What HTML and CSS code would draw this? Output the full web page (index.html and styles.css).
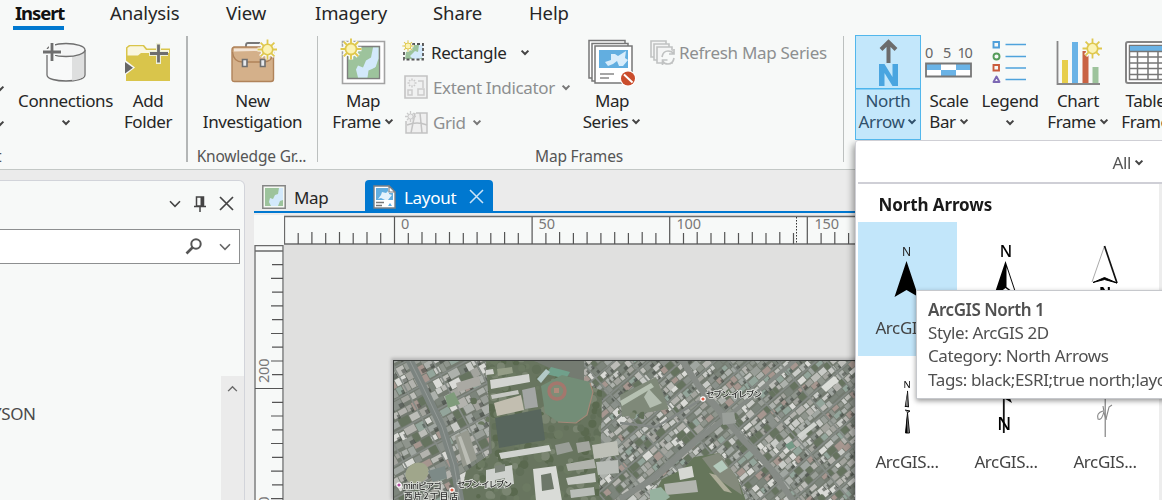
FILE: index.html
```html
<!DOCTYPE html>
<html lang="en">
<head>
<meta charset="utf-8">
<title>Layout</title>
<link rel="stylesheet" href="styles.css">
</head>
<body>
<svg class="defs" width="0" height="0">
  <defs>
    <symbol id="chev" viewBox="0 0 10 7"><path d="M1.6 1.6 5 5 8.4 1.6" fill="none" stroke="currentColor" stroke-width="2"/></symbol>
    <symbol id="thin" viewBox="0 0 12 8"><path d="M1 1.3 6 6.3 11 1.3" fill="none" stroke="currentColor" stroke-width="1.6"/></symbol>
    <symbol id="sun" viewBox="-10 -10 20 20">
      <path d="M0-9.5V9.5M-9.5 0H9.5M-6.6-6.6 6.6 6.6M6.6-6.6-6.6 6.6" stroke="#f7f9f8" stroke-width="4"/>
      <circle r="7" fill="#f7f9f8"/>
      <path d="M0-9.5V9.5M-9.5 0H9.5M-6.6-6.6 6.6 6.6M6.6-6.6-6.6 6.6" stroke="#dfc84e" stroke-width="1.7"/>
      <circle r="5" fill="#fbf3b4" stroke="#dfc84e" stroke-width="1.6"/>
    </symbol>
  </defs>
</svg>

<header class="ribbon">
  <nav class="tabs">
    <span class="tab tab-on">Insert</span><span class="tab">Analysis</span><span class="tab">View</span><span class="tab">Imagery</span><span class="tab">Share</span><span class="tab">Help</span>
  </nav>
  <div class="groups">
    <section class="group g-project">
      <div class="tools">
        <div class="cut"><svg class="chev"><use href="#chev"/></svg><svg class="chev"><use href="#chev"/></svg></div>
        <div class="big w-conn">
          <svg class="ico" width="48" height="48" viewBox="0 0 48 48">
            <path d="M5 12v25c0 8 38 8 38 0V12" fill="#f8f9f9" stroke="#6f6f6f" stroke-width="1.3"/>
            <path d="M30 17v25.500c7-.8 12-2.500 12-5.500V12c-1 3-5 4.500-12 5z" fill="#dedfdf"/>
            <ellipse cx="24" cy="12" rx="19" ry="6.500" fill="#f4f5f5" stroke="#6f6f6f" stroke-width="1.3"/>
            <path d="M10 4v20M0 14h20" stroke="#f7f9f8" stroke-width="6"/>
            <path d="M10 5v18M1 14h18" stroke="#6e6e6e" stroke-width="2.800"/>
          </svg>
          <span>Connections</span><svg class="chev under"><use href="#chev"/></svg>
        </div>
        <div class="big w-folder">
          <svg class="ico" width="48" height="48" viewBox="0 0 48 48">
            <path d="M2 9.500 5 7h15l3 3.500h23V43H2z" fill="#d9c54b"/>
            <path d="M3.500 10 6 8.300h13l3 3.700h23v3H17l-3 2.500H3.500z" fill="#f9f6df"/>
            <path d="M34.500 5v21M25 15.500h19" stroke="#eef0d8" stroke-width="5"/>
            <path d="M34.500 6.500v18M26 15.500h18" stroke="#6e6e6e" stroke-width="2.800"/>
            <path d="M0 21v17l11-8.500z" fill="#f7f9f8"/><path d="M1 24v11.500l8-5.800z" fill="#666"/>
          </svg>
          <span>Add</span><span>Folder</span>
        </div>
      </div>
      <div class="caption cap-left">t</div>
    </section>
    <section class="group g-know">
      <div class="tools center">
        <div class="big w-inv">
          <svg class="ico" width="48" height="48" viewBox="0 0 48 48">
            <path d="M17 10V7q0-2 2-2h12" fill="none" stroke="#777" stroke-width="1.800"/>
            <path d="M4.500 9h40v32q0 2.500-2.500 2.500H5.500Q3 43.500 3 41V12q0-3 3-3z" fill="#d4b08a" stroke="#b0835a" stroke-width="1.400"/>
            <path d="M5 10.500h37v3q-16-1-37 0z" fill="#f3e5d7"/>
            <path d="M3.500 14q1 10 10 10h21q9 0 10-10" fill="none" stroke="#b0835a" stroke-width="1.400"/>
            <path d="M13.500 21.500h4.500v7h-4.500zM31.500 21.500H36v7h-4.500z" fill="#e8eaee" stroke="#6f6f6f" stroke-width="1.600"/>
            <use href="#sun" x="28" y="1" width="21" height="21"/>
          </svg>
          <span>New</span><span>Investigation</span>
        </div>
      </div>
      <div class="caption">Knowledge Gr...</div>
    </section>
    <section class="group g-frames">
      <div class="tools">
        <div class="big w-mapframe">
          <svg class="ico" width="48" height="48" viewBox="0 0 48 48">
            <path d="M3.500 3.500h42v42h-42z" fill="#fff" stroke="#a3a3a3" stroke-width="1.600"/>
            <path d="M8.500 8.500h32v32h-32z" fill="#9dc39c" stroke="#7e7e7e" stroke-width="1.400"/>
            <path d="M39.500 9.500v11l-3 9-7 3-1 7H19l-2-8 2-4 5 2 3-7 5-3 2-10z" fill="#d3e9fb"/>
            <path d="m34 31 5.500-4v12.500H29.500l1-5z" fill="#9dc39c"/>
            <use href="#sun" x="1" y="0" width="22" height="22"/>
          </svg>
          <span>Map</span><span>Frame<svg class="chev"><use href="#chev"/></svg></span>
        </div>
        <div class="smalls">
          <div class="small">
            <svg width="24" height="24" viewBox="0 0 24 24"><path d="M3 19 4 12 9 10 12 5h8v14z" fill="#9dc39c"/><path d="m11 19-3-3 5-5 3 1 1-7h4v12l-4 2z" fill="#d3e9fb"/><path d="M10 4h11v15.500H2V10" fill="none" stroke="#555" stroke-width="1.800" stroke-dasharray="3 2"/><use href="#sun" x="0" y="0" width="12" height="12"/></svg>
            <span>Rectangle</span><svg class="chev gap"><use href="#chev"/></svg>
          </div>
          <div class="small off">
            <svg width="26" height="24" viewBox="-2 0 26 24"><path d="M1 1h22v22H1z" fill="#f0f1f1" stroke="#c3c3c3" stroke-width="1.600"/><path d="M8 3.500v9M3.500 8h9M5 5l6 6m0-6-6 6M14 6h5v7M4 15h4v5H4zM14 14h6v6h-6z" fill="none" stroke="#cbcbcb" stroke-width="1.500"/><circle cx="8" cy="8" r="2.500" fill="#eee"/></svg>
            <span class="ls">Extent Indicator</span><svg class="chev"><use href="#chev"/></svg>
          </div>
          <div class="small off">
            <svg width="26" height="24" viewBox="-2 0 26 24"><path d="M12 3h11v20H2V11" fill="#efefef" stroke="#c3c3c3" stroke-width="1.500"/><path d="M11 3 7 23M16 3l2 20M3 15q10-4 20 0" fill="none" stroke="#c3c3c3" stroke-width="1.500"/><path d="M6.500 1v11M1 6.500h11M3 3l7 7m0-7-7 7" stroke="#cbcbcb" stroke-width="1.300"/><circle cx="6.500" cy="6.500" r="2.500" fill="#eee" stroke="#ccc"/></svg>
            <span>Grid</span><svg class="chev"><use href="#chev"/></svg>
          </div>
        </div>
        <div class="big w-series">
          <svg class="ico" width="52" height="48" viewBox="0 0 52 48">
            <g fill="#fff" stroke="#777" stroke-width="1.500"><path d="M3 2.500h36V40H3z"/><path d="M6 5.500h36V43H6z"/><path d="M9 8h37v37H9z"/></g>
            <path d="M13 12h29v18H13z" fill="#62aee0"/><path d="M25 16h4l3 2 8-5-1 7 3 2-5 6h-4l-2-5-4 3-5 2-3-4 6-2z" fill="#d9edfb"/>
            <path d="M14 36h14M14 40h9" stroke="#888" stroke-width="1.500"/>
            <circle cx="42" cy="40.500" r="8" fill="#fff"/><circle cx="42" cy="40.500" r="7" fill="#ca4d2c"/><path d="m38 36.500 8.500 8" stroke="#fff" stroke-width="2"/>
          </svg>
          <span>Map</span><span>Series<svg class="chev"><use href="#chev"/></svg></span>
        </div>
        <div class="small off refresh">
          <svg width="25" height="25" viewBox="0 0 25 25"><g fill="#f4f5f5" stroke="#c0c2c2" stroke-width="1.600"><path d="M1 1h15v16H1z"/><path d="M4 4h15v16H4z"/><path d="M7 7h15v16H7z"/></g><circle cx="18" cy="17" r="7.500" fill="#f7f9f8"/><path d="M12 17q1-6 6-6 4 0 6 3m0-5v5h-5M24 18q-1 6-6 6-4 0-5.500-3m0 4v-5h5" fill="none" stroke="#c0c2c2" stroke-width="1.700"/></svg>
          <span>Refresh Map Series</span>
        </div>
      </div>
      <div class="caption">Map Frames</div>
    </section>
    <section class="group g-surround">
      <div class="tools">
        <div class="big w-north">
          <svg class="ico" width="48" height="52" viewBox="0 0 48 52"><path d="M24.500 27V7M17 13.500 24.500 6l7.500 7.500" fill="none" stroke="#6c6c6c" stroke-width="4"/><path d="M15 50V28h5.500l8 13V28H34v22h-5.500l-8-13v13z" fill="#4aa5e0"/></svg>
          <span>North</span><span>Arrow<svg class="chev"><use href="#chev"/></svg></span>
        </div>
        <div class="big w-scale">
          <svg class="ico" width="50" height="48" viewBox="0 0 50 48"><g font-family="Noto Sans" font-size="14.500" fill="#666"><text x="1" y="20">0</text><text x="19" y="20">5</text><text x="33.500" y="20" textLength="15">10</text></g><path d="M2 25.500h45v13H2z" fill="#fff"/><path d="M2 25.500h15V32H2zM17 32h15v6.500H17zM32 25.500h15V32H32z" fill="#6ab3e6"/><path d="M2 25.500h45v13H2z" fill="none" stroke="#777" stroke-width="1.800"/></svg>
          <span>Scale</span><span>Bar<svg class="chev"><use href="#chev"/></svg></span>
        </div>
        <div class="big w-legend">
          <svg class="ico" width="48" height="48" viewBox="0 0 48 48"><g fill="none" stroke-width="1.900"><path d="M7.500 4h5.500v5.500H7.500z" stroke="#4f9fda"/><circle cx="10.500" cy="18.500" r="3" stroke="#559c5a"/><path d="M7.500 27h5.500v5.500H7.500z" stroke="#ca5b3c"/><path d="M10.500 38.500 13.500 44h-6z" stroke="#7c68b4" stroke-linejoin="round"/><path d="M19.500 6.500H40M19.500 18.500H40M19.500 30H40M19.500 41.500H40" stroke="#4fa3dc" stroke-width="1.600"/></g></svg>
          <span>Legend</span><svg class="chev under"><use href="#chev"/></svg>
        </div>
        <div class="big w-chart">
          <svg class="ico" width="48" height="48" viewBox="0 0 48 48"><path d="M8 22h6v23H8z" fill="#e7ce4c"/><path d="M18 4h6v41h-6z" fill="#6ab3e6"/><path d="M28.500 13h6v32h-6z" fill="#c96343"/><path d="M38.500 29h6v16h-6z" fill="#9dc39c"/><path d="M3.500 3v43H46" fill="none" stroke="#888" stroke-width="1.800"/><use href="#sun" x="28" y="0" width="21" height="21"/></svg>
          <span>Chart</span><span>Frame<svg class="chev"><use href="#chev"/></svg></span>
        </div>
        <div class="big w-table">
          <svg class="ico" width="48" height="48" viewBox="0 0 48 48"><rect x="4" y="4" width="52" height="41" rx="2" fill="#fff" stroke="#858585" stroke-width="2"/><path d="M7.500 7.500H50v34H7.500z" fill="#fff" stroke="#777" stroke-width="1.500"/><path d="M8 8h42v5H8z" fill="#6ab3e6"/><path d="M7 13.500h43M7 19h43M7 25h43M7 30.500h43M7 36.500h43M15.500 13v28M26 13v28M36 13v28M46 13v28" stroke="#777" stroke-width="1.500"/></svg>
          <span>Table</span><span>Frame</span>
        </div>
      </div>
    </section>
  </div>
</header>

<main class="work">
  <aside class="pane">
    <div class="pane-bar">
      <svg width="12" height="8"><use href="#thin"/></svg>
      <svg width="12" height="16" viewBox="0 0 12 16"><path d="M2.500 1h7v9h-7zM0 10.500h12M6 10.500V16" fill="none" stroke="#444" stroke-width="1.500"/><path d="M6.500 1h3v9h-3z" fill="#444"/></svg>
      <svg width="15" height="15" viewBox="0 0 15 15"><path d="m1 1 13 13M14 1 1 14" stroke="#444" stroke-width="1.700"/></svg>
    </div>
    <div class="search">
      <svg width="18" height="17" viewBox="0 0 18 17"><circle cx="11" cy="6" r="4.700" fill="none" stroke="#555" stroke-width="2"/><path d="M7.500 9.500 1.500 15.500" stroke="#555" stroke-width="2.600"/></svg>
      <svg width="12" height="8"><use href="#thin"/></svg>
    </div>
    <div class="pane-body">
      <span class="node">YSON</span>
      <div class="scroll"><svg width="11" height="7" viewBox="0 0 12 8"><path d="M1 7 6 2l5 5" fill="none" stroke="#666" stroke-width="1.600"/></svg></div>
    </div>
  </aside>

  <section class="doc">
    <div class="doc-tabs">
      <div class="doc-tab">
        <svg width="24" height="24" viewBox="0 0 24 24"><path d="M.8.800h22.400v22.400H.8z" fill="#f5f8f2" stroke="#858585" stroke-width="1.500"/><path d="M3 3h18v18H3z" fill="#9dc39c"/><path d="M17 3h4v12l-3 1-2 5H9l-2-4 1-4 3 1 2-4 3-1z" fill="#d3e9fb"/></svg>
        <span>Map</span>
      </div>
      <div class="doc-tab doc-on">
        <svg width="23" height="24" viewBox="0 0 23 24"><path d="M1 1h15l6 6v16H1z" fill="#fff" stroke="#7c8084" stroke-width="1.400"/><path d="M3 3h12v5h5v7H3z" fill="#62aee0"/><path d="m9 7 4 1 3-3v4l3 1-4 5h-3l-4-2-3 1 3-4z" fill="#e4f2fc"/><path d="M16 1v6h6z" fill="#fff" stroke="#7c8084" stroke-width="1.200"/><path d="M3 17.500h8M3 20.500h6" stroke="#777" stroke-width="1.300"/><path d="m15 21 2-3 2 3z" fill="#62aee0"/></svg>
        <span>Layout</span>
        <svg class="close" width="15" height="15" viewBox="0 0 15 15"><path d="m1 1 13 13M14 1 1 14" stroke="#cfe5f7" stroke-width="1.500"/></svg>
      </div>
    </div>
    <div class="view">
      <div class="corner"></div>
      <svg class="hruler" width="577" height="30" viewBox="0 0 577 30">
        <path d="M577 1.500H.500V29H577" fill="#f7f9f8" stroke="#6a6a6a" stroke-width="1.300"/>
        <path id="hticks" fill="none" stroke="#555" stroke-width="1.200"/>
        <path d="M512.500 2v27" stroke="#333" stroke-dasharray="1.500 1.500"/>
        <g class="rl"><text x="117" y="14">0</text><text x="254.500" y="14" textLength="16.500">50</text><text x="392.500" y="14" textLength="24.500">100</text><text x="530.500" y="14" textLength="24.500">150</text></g>
      </svg>
      <svg class="vruler" width="30" height="255" viewBox="0 0 30 255">
        <path d="M1 0V255M1 .500H29M29 0V255M1 6H29" fill="none" stroke="#6a6a6a" stroke-width="1.300"/>
        <path id="vticks" fill="none" stroke="#555" stroke-width="1.200"/>
        <g class="rl"><text transform="translate(14.500 138) rotate(-90)" textLength="24.500">200</text><text transform="translate(14.500 276) rotate(-90)" textLength="24.500">150</text></g>
      </svg>
      <div class="page-area">
        <div class="map">
          <canvas id="imagery" width="470" height="140"></canvas>
          <svg class="places" width="470" height="140" viewBox="0 0 470 140">
            <g fill="#e0604a" stroke="#fff" stroke-width="1.200"><circle cx="309" cy="38" r="2.200"/><circle cx="58" cy="129" r="2.200"/></g><circle cx="5" cy="124" r="2.200" fill="#b44fa0" stroke="#fff" stroke-width="1.200"/>
            <text x="312" y="35.500" textLength="56">セブン-イレブン</text>
            <text x="63" y="126" textLength="55">セブン-イレブン</text>
            <text x="9" y="128" textLength="39">miniピアゴ</text>
            <text x="10" y="138" textLength="54">西片2丁目店</text>
          </svg>
        </div>
      </div>
    </div>
  </section>
</main>

<div class="gallery">
  <div class="filter"><span>All</span><svg class="chev"><use href="#chev"/></svg></div>
  <div class="gallery-body">
    <h2>North Arrows</h2>
    <div class="grid">
      <div class="cell cell-on">
        <svg width="60" height="70" viewBox="0 0 60 70"><text x="29.500" y="11.500" font-size="12" text-anchor="middle" fill="#222">N</text><path d="M29.500 17 41.500 53 29.500 46 17.500 53z"/></svg>
        <span>ArcGIS...</span>
      </div>
      <div class="cell">
        <svg width="60" height="70" viewBox="0 0 60 70"><text x="30" y="13" font-size="16" text-anchor="middle" font-weight="500" textLength="11">N</text><path d="M29.500 17 41.500 53 29.500 44 17.500 53z"/><path d="M30.500 23 39.500 50 30.500 43z" fill="#fff"/></svg>
        <span>ArcGIS...</span>
      </div>
      <div class="cell">
        <svg width="60" height="70" viewBox="0 0 60 70"><path d="M29.500 2 17 38" stroke="#aaa" fill="none"/><path d="M29.500 2 42 39" stroke="#111" stroke-width="1.700" fill="none"/><path d="M18 38.500 29.500 33.500 42 39 29.500 35.500z" stroke="#000"/><text x="30" y="53" font-size="15" font-weight="bold" text-anchor="middle">N</text></svg>
        <span>ArcGIS...</span>
      </div>
      <div class="cell">
        <svg width="60" height="70" viewBox="0 0 60 70"><text x="30" y="10" font-size="9.500" text-anchor="middle">N</text><path d="M30.500 12v17h-2.800z"/><path d="M30.500 13l1 16-3-1M28 32l5 1-3 2M30.500 35l2 20h-4z" fill="#888" stroke="#111" stroke-width="1"/><path d="m30 38-1.500 17h2z"/></svg>
        <span>ArcGIS...</span>
      </div>
      <div class="cell">
        <svg width="60" height="70" viewBox="0 0 60 70"><path d="M27.800 10v45" stroke="#111" stroke-width="1.800"/><path d="M27 20V4l9 21-5-3z"/><text x="28.300" y="52" font-size="18" font-weight="500" text-anchor="middle" textLength="12">N</text></svg>
        <span>ArcGIS...</span>
      </div>
      <div class="cell">
        <svg width="60" height="70" viewBox="0 0 60 70"><path d="M30.200 10v49" stroke="#777" stroke-width="1.100"/><path d="M28 33q-7 2-5 8 4 2 6-8l-1-5q2 14 4 13M31 41l3-12 3-2" fill="none" stroke="#888" stroke-width="1.100"/></svg>
        <span>ArcGIS...</span>
      </div>
    </div>
  </div>
</div>

<div class="tip">
  <b>ArcGIS North 1</b>
  <span>Style: ArcGIS 2D</span>
  <span>Category: North Arrows</span>
  <span>Tags: black;ESRI;true north;layout</span>
</div>
<script src="map.js"></script>
</body>
</html>
```
FILE: styles.css
```css
* { box-sizing: border-box; }
body { margin: 0; width: 1162px; height: 500px; overflow: hidden; position: relative; background: #ebebeb; color: #262626; font: 17px/21px "Noto Sans", "Noto Sans CJK JP", sans-serif; letter-spacing: -0.4px; white-space: nowrap; }
svg { flex: none; }
.defs { position: absolute; }

.ribbon { height: 170px; background: #f7f9f8; border-bottom: 1.5px solid #c3c8c6; overflow: hidden; }
.tabs { display: grid; grid-template-columns: 97px 116px 89px 118px 96px 80px; padding-left: 13px; height: 36px; font-size: 18.500px; letter-spacing: -0.1px; line-height: 25px; }
.tab { height: 30px; }
.tab-on { width: 51px; padding-left: 2px; font-weight: 700; letter-spacing: -1.1px; border-bottom: 4px solid #0078d0; color: #111; }
.groups { display: flex; height: 126px; }
.group { flex: none; display: flex; flex-direction: column; border-right: 1.5px solid #bcc0bf; }
.g-project { width: 188px; border-right: 2px solid #b3b6b6; }
.g-know { width: 130px; }
.g-frames { width: 526px; }
.g-surround { width: 330px; border: 0; padding-left: 11px; }
.tools { flex: none; display: flex; height: 110px; }
.center { justify-content: center; }
.caption { height: 16px; font-size: 15.500px; letter-spacing: -0.2px; line-height: 20px; text-align: center; color: #555; }
.g-frames .caption { padding-right: 3px; }
.g-know .caption { padding-right: 2px; }
.cap-left { text-align: left; text-indent: -4px; }
.big { flex: none; display: flex; flex-direction: column; align-items: center; height: 104px; }
.big .ico { height: 50px; margin: 1px 0 3px; overflow: hidden; }
.big span { display: flex; align-items: center; }
.chev { width: 10px; height: 7px; margin-left: 3px; color: #444; }
.big .under { margin: 8px 0 0; }
.cut { width: 16px; padding-top: 49px; display: flex; flex-direction: column; gap: 28px; }
.cut .chev { margin-left: -5px; }
.w-conn { width: 99px; }
.w-folder { width: 66px; }
.w-inv { width: 110px; }
.w-mapframe { width: 66px; margin-left: 12px; }
.w-series { width: 66px; margin-left: 7px; }
.smalls { width: 176px; padding: 4px 0 0 6px; display: flex; flex-direction: column; gap: 11px; }
.small { display: flex; align-items: center; gap: 5px; height: 24px; }
.small .chev { margin-left: 1px; }
.small .gap { margin-left: 9px; }
.ls { letter-spacing: -0.35px; }
.off { color: #8d8f90; }
.off .chev { color: #777; }
.refresh { margin: 4px 0 0 5px; gap: 4px; letter-spacing: -0.3px; }
.w-north { width: 66px; margin-top: -1px; height: 105px; border: 1.500px solid #52b7ec; background: linear-gradient(#4cb5ed, #4cb5ed) 0 52px / 100% 1.500px no-repeat #c3e7fb; color: #2f506b; }
.big.w-north .ico { height: 52px; margin: 0 0 2px; }
.w-north .chev { color: #2f506b; }
.w-scale { width: 56px; }
.w-legend { width: 66px; }
.w-chart { width: 70px; }
.w-table { width: 65px; }

.work { display: flex; height: 330px; padding-top: 10px; }
.pane { flex: none; width: 245px; height: 322px; background: #f7f9f8; border: 1.500px solid #d2d4da; border-left: 0; border-radius: 0 6px 0 0; }
.pane-bar { height: 48px; display: flex; align-items: center; justify-content: flex-end; gap: 13px; padding: 0 10px 3px 0; color: #444; }
.search { width: 240px; height: 35px; margin-bottom: 112px; background: #fff; border: 1.500px solid #8d8f90; border-left: 0; display: flex; align-items: center; justify-content: flex-end; gap: 16px; padding-right: 8px; color: #666; }
.pane-body { display: flex; justify-content: space-between; height: 125px; overflow: hidden; }
.node { margin: 27px 0 0 -8px; color: #4a4a4a; }
.scroll { width: 23px; background: #ebebeb; display: flex; justify-content: center; padding-top: 9px; }

.doc { flex: none; width: 907px; margin-left: 9px; }
.doc-tabs { display: flex; height: 33px; border-bottom: 2.500px solid #0078d0; }
.doc-tab { width: 111px; display: flex; align-items: center; gap: 8px; padding: 3px 0 0 8px; }
.doc-tab span { font-size: 17px; }
.doc-on { width: 128px; background: #0078d0; border-radius: 4px 4px 0 0; color: #fff; }
.doc-on span { letter-spacing: -0.3px; }
.doc-on .close { margin-left: 5px; margin-top: -2px; }
.view { display: grid; grid-template-columns: 30px 877px; grid-template-rows: 30px 255px; margin-top: 2px; }
.corner { background: #f7f9f8; }
.vruler { background: #f7f9f8; }
.rl text { font-size: 14.500px; fill: #777; letter-spacing: 0; }
.page-area { background: #e0e0df; padding: 115px 0 0 109px; }
.map { position: relative; width: 470px; height: 140px; border: solid #3b3e3c; border-width: 1.500px 0 0 1.500px; box-shadow: -1px -1px 3px 1px #b4b4b4; }
.places { position: absolute; left: 0; top: 0; font: 500 8.500px "Noto Sans CJK JP", sans-serif; letter-spacing: 0; fill: #2c2c2c; }
.places text { stroke: #dfe2dc; stroke-width: 1.600px; paint-order: stroke; }

.gallery { position: absolute; left: 855px; top: 140px; width: 320px; height: 370px; background: #fff; border: 1.500px solid #cfcfd5; border-radius: 3px; box-shadow: -2px 4px 7px rgba(0, 0, 0, .4); clip-path: inset(0 0 0 -12px); }
.filter { display: flex; align-items: center; height: 43px; margin-left: 1.500px; padding: 1px 0 0 255px; border-bottom: 2px solid #cfcfd6; color: #555; }
.gallery-body { margin-left: 1.500px; width: 306px; height: 330px; border-right: 5px solid #ededed; }
h2 { margin: 0; height: 38px; padding-left: 21px; font-size: 17px; line-height: 41px; letter-spacing: -0.1px; color: #1a1a1a; }
.grid { display: grid; grid-template-columns: 99px 99px 99px; grid-auto-rows: 134px; width: 297px; }
.cell { display: flex; flex-direction: column; align-items: center; padding-top: 22px; color: #444; }
.cell svg { margin-bottom: 3px; letter-spacing: 0; }
.cell-on { background: #c2e6fa; }

.tip { position: absolute; left: 916px; top: 290px; width: 260px; height: 109px; padding: 7px 0 0 11px; background: #fff; border: 1.500px solid #c6c8cc; box-shadow: 0 2px 5px rgba(0, 0, 0, .4); display: flex; flex-direction: column; line-height: 23.200px; color: #505050; letter-spacing: -0.37px; }
.tip b { font-weight: 600; color: #505050; letter-spacing: -0.45px; }
```
FILE: map.js
```js
// Ruler ticks: ten divisions per 50 mm
(function () {
  var h = '', v = '', k, p;
  for (k = -7; k < 35; k++) {
    p = (110.5 + k * 13.76).toFixed(1);
    h += 'M' + p + ' ' + (k % 10 === 0 ? 2 : k % 2 ? 18 : 17) + 'V29';
  }
  for (k = -9; k < 9; k++) {
    p = (143.5 + k * 13.76).toFixed(1);
    v += 'M' + (k === 0 ? 1 : k % 2 ? 18 : 17) + ' ' + p + 'H29';
  }
  document.getElementById('hticks').setAttribute('d', h);
  document.getElementById('vticks').setAttribute('d', v);
})();

// Aerial imagery: roofs, roads, school grounds and trees
(function () {
  var c = document.getElementById('imagery').getContext('2d');
  var seed = 7;
  function rnd() { seed = (seed * 16807) % 2147483647; return seed / 2147483647; }
  function path(pts) {
    c.beginPath();
    for (var i = 0; i < pts.length; i += 2) c.lineTo(pts[i], pts[i + 1]);
  }
  function poly(col, pts) { path(pts); c.closePath(); c.fillStyle = col; c.fill(); }
  function road(col, w, pts) { path(pts); c.strokeStyle = col; c.lineWidth = w; c.stroke(); }
  var roofs = ['#adb1ac', '#999e98', '#c9cbc7', '#8b918b', '#a3a49e', '#b3b3ae', '#8f958d', '#dadbd7', '#a6968f', '#93a59b', '#7d857c', '#a0a6a1', '#bcbdb8'];
  function blocks(area, angle, s) {
    c.save();
    path(area); c.closePath(); c.clip();
    c.translate(230, 70); c.rotate(angle);
    var row = 0, y, x, w;
    for (y = -280; y < 280; y += s, row++) {
      if (row % 4 === 3) { c.fillStyle = '#858b86'; c.fillRect(-320, y, 640, 1.6); y += 1.8 - s; continue; }
      for (x = -320 + rnd() * 6; x < 320; x += w + 0.8) {
        w = s * (0.5 + rnd() * 0.8);
        if (rnd() < 0.09) { c.fillStyle = '#66735f'; c.fillRect(x, y, w, s * 0.9); continue; }
        c.fillStyle = roofs[Math.floor(rnd() * roofs.length)];
        c.fillRect(x, y + rnd() * 1.6, w, s * (0.55 + rnd() * 0.45));
        if (rnd() < 0.4) { c.fillStyle = 'rgba(60,66,60,.55)'; c.fillRect(x + w * 0.6, y + s * 0.5, w * 0.5, s * 0.5); }
      }
    }
    for (x = -320; x < 320; x += 37) { c.fillStyle = '#858b86'; c.fillRect(x, -280, 1.6, 560); }
    c.restore();
  }
  function trees(area, n) {
    c.save(); path(area); c.closePath(); c.clip();
    var x0 = Math.min(area[0], area[6]), y0 = Math.min(area[1], area[3]);
    for (var i = 0; i < n; i++) {
      c.fillStyle = ['#5a694f', '#6c7a62', '#616f58', '#7b8672'][i % 4];
      c.beginPath(); c.arc(x0 - 10 + rnd() * 200, y0 - 5 + rnd() * 145, 2 + rnd() * 3, 0, 7); c.fill();
    }
    c.restore();
  }
  c.filter = 'blur(0.7px)';
  c.fillStyle = '#747b71'; c.fillRect(0, 0, 470, 140);
  blocks([0, 0, 95, 0, 95, 140, 0, 140], -0.5, 9);
  blocks([190, 0, 470, 0, 470, 140, 190, 140], -0.72, 6.8);

  // School campus
  var campus = [92, 0, 140, 0, 208, 30, 205, 140, 66, 140, 72, 110, 98, 92];
  poly('#68755f', campus); trees(campus, 500);
  trees([66, 30, 95, 30, 95, 65, 66, 60], 90);
  poly('#7f9b7b', [51, 35, 60, 31, 66, 43, 54, 47]);
  poly('#d3d5d1', [96, 19, 135, 13, 136, 21, 97, 28]);
  poly('#959e87', [103, 8, 118, 6, 119, 12, 104, 15]);
  poly('#d0d2ce', [92, 9, 99, 8, 100, 13, 92, 14]);
  poly('#c2beb0', [100, 42, 127, 34, 130, 49, 103, 55]);
  poly('#c6c8c3', [97, 34, 124, 29, 125, 33, 98, 38]);
  poly('#a3a6a4', [128, 29, 141, 26, 144, 46, 131, 48]);
  poly('#58665d', [101, 57, 147, 48, 151, 79, 105, 87]);
  poly('#d0d3cf', [105, 92, 155, 84, 157, 90, 107, 98]);
  poly('#70a08b', [152, 13, 157, 6, 176, 11, 172, 18]);
  poly('#b3c9c7', [143, 18, 152, 8, 156, 11, 147, 22]);
  poly('#738d77', [147, 25, 168, 14, 196, 21, 199, 31, 193, 54, 182, 62, 164, 61, 151, 52]);
  road('#a58878', 1.2, [196, 22, 199, 31, 193, 54, 182, 62, 164, 61]);
  c.beginPath(); c.arc(163, 30, 8, 0, 7); c.fillStyle = '#7e8c76'; c.fill(); c.strokeStyle = '#a4776d'; c.lineWidth = 3.5; c.stroke();
  c.fillStyle = '#b18b7c'; c.fillRect(160, 27, 5, 5);
  poly('#cfd2ce', [92, 109, 118, 104, 120, 123, 92, 127]);
  poly('#7d857a', [101, 105, 111, 103, 111, 110, 101, 112]);
  poly('#848c81', [101, 119, 111, 117, 111, 128, 101, 128]);
  poly('#d9dbd7', [139, 108, 162, 105, 168, 140, 142, 140]);
  poly('#6d7769', [147, 114, 157, 112, 160, 128, 148, 130]);
  poly('#999e97', [161, 84, 175, 81, 179, 90, 163, 94]);
  poly('#a2a59e', [182, 82, 195, 80, 197, 89, 184, 92]);
  poly('#bec0b8', [198, 84, 223, 80, 225, 94, 200, 98]);
  poly('#b0b3ac', [172, 103, 200, 98, 202, 107, 174, 110]);
  poly('#c7cac5', [172, 117, 201, 112, 202, 121, 174, 124]);
  poly('#b9bdb8', [202, 101, 224, 99, 225, 112, 204, 114]);
  poly('#b9bdb8', [176, 129, 200, 126, 201, 134, 177, 137]);

  // Left-hand landmarks
  poly('#979a90', [61, 75, 74, 69, 83, 98, 69, 106]);
  poly('#bbbdb5', [64, 76, 67, 75, 77, 102, 73, 104]);
  poly('#aaa9a3', [62, 22, 85, 15, 87, 24, 64, 31]);
  c.beginPath(); c.ellipse(23, 112, 12, 10, -0.5, 0, 7); c.fillStyle = '#a0a68b'; c.fill();
  poly('#7d8a87', [34, 110, 51, 105, 53, 117, 39, 121]);
  road('#7c8480', 8, [14, -4, 29, 26, 48, 66, 60, 104, 67, 144]);
  road('#949a97', 1, [14, -4, 29, 26, 48, 66, 60, 104, 67, 144]);

  // Open ground east of the campus
  poly('#7f8979', [226, 34, 262, 16, 275, 48, 250, 52, 228, 56]);
  poly('#b6c1b2', [226, 40, 257, 22, 260, 26, 228, 45]);
  poly('#b3bdb0', [255, 28, 268, 42, 256, 47, 250, 36]);
  trees([224, 44, 250, 44, 250, 62, 224, 62], 90);
  poly('#66765b', [289, 108, 300, 96, 325, 92, 344, 118, 352, 140, 256, 140, 268, 118]);
  poly('#848a7c', [308, 97, 325, 92, 344, 118, 348, 134, 324, 118]);
  poly('#adad99', [315, 112, 322, 114, 338, 132, 330, 130]);
  poly('#d6d8d3', [284, 108, 298, 105, 300, 116, 286, 119]);
  poly('#b1b4ae', [270, 123, 302, 119, 304, 131, 272, 134]);
  poly('#97b2a0', [256, 129, 267, 126, 276, 136, 268, 142, 256, 142]);
  poly('#b3cabc', [319, 105, 328, 99, 334, 107, 326, 112]);
  poly('#759a87', [391, 84, 398, 80, 401, 86, 395, 89]);
  poly('#dcded9', [427, 26, 440, 15, 445, 20, 432, 31]);
  poly('#d0d3ce', [403, 74, 420, 61, 423, 64, 406, 78]);

  // Arterial roads
  road('#868b86', 6, [286, -4, 306, 27, 333, 60, 352, 82, 377, 108, 402, 144]);
  road('#868b86', 6, [226, 138, 262, 116, 302, 80, 333, 56]);
  road('#868b86', 4, [333, 56, 360, 34, 405, -4]);
  road('#838885', 2.5, [226, 62, 262, 66, 305, 40]);
  poly('#9a9f9a', [328, 52, 340, 51, 342, 62, 329, 64]);
  c.filter = 'none';
})();
```
